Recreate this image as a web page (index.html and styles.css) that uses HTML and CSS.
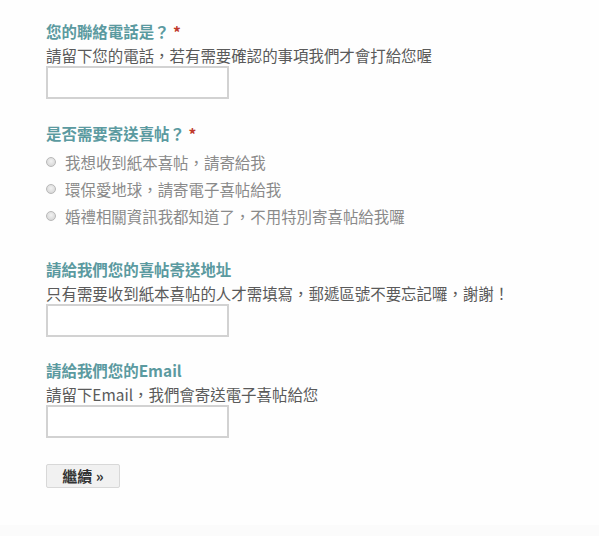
FILE: index.html
```html
<!DOCTYPE html>
<html lang="zh-TW">
<head>
<meta charset="utf-8">
<title>表單</title>
<link rel="stylesheet" href="styles.css">
</head>
<body>
<div class="page">
  <form class="form">
    <div class="field">
      <div class="label">您的聯絡電話是？ <span class="req">*</span></div>
      <div class="desc">請留下您的電話，若有需要確認的事項我們才會打給您喔</div>
      <input class="text" type="text">
    </div>
    <div class="field field-radio">
      <div class="label">是否需要寄送喜帖？ <span class="req">*</span></div>
      <ul class="choices">
        <li class="choice"><span class="radio"></span>我想收到紙本喜帖，請寄給我</li>
        <li class="choice"><span class="radio"></span>環保愛地球，請寄電子喜帖給我</li>
        <li class="choice"><span class="radio"></span>婚禮相關資訊我都知道了，不用特別寄喜帖給我囉</li>
      </ul>
    </div>
    <div class="field field-addr">
      <div class="label">請給我們您的喜帖寄送地址</div>
      <div class="desc">只有需要收到紙本喜帖的人才需填寫，郵遞區號不要忘記囉，謝謝！</div>
      <input class="text" type="text">
    </div>
    <div class="field field-mail">
      <div class="label">請給我們您的Email</div>
      <div class="desc">請留下Email，我們會寄送電子喜帖給您</div>
      <input class="text" type="text">
    </div>
    <div class="actions">
      <button type="button" class="btn">繼續 »</button>
    </div>
  </form>
  <div class="footer-band"></div>
</div>
</body>
</html>
```
FILE: styles.css
```css
html, body {
  margin: 0;
  padding: 0;
  background: #fefefe;
}
.page {
  height: 536px;
  display: flex;
  flex-direction: column;
  font-family: "Noto Sans CJK TC", "Noto Sans", sans-serif;
  -webkit-locale: "zh-TW";
  font-size: 15.45px;
  color: #5a5a5a;
}
.form {
  flex: 1;
  padding: 20px 0 0 46px;
}
.field {
  display: flex;
  flex-direction: column;
  align-items: flex-start;
}
.label {
  font-weight: bold;
  color: #5b9aa0;
  line-height: 22px;
  height: 22px;
}
.req {
  color: #c0392b;
}
.desc {
  margin-top: 2px;
  line-height: 22px;
  height: 22px;
  color: #5a5a5a;
}
.text {
  margin: 0;
  width: 183px;
  height: 33px;
  box-sizing: border-box;
  border: 2px solid #d2d2d2;
  background: #fff;
  padding: 0 4px;
}
.field-radio {
  margin-top: 23px;
}
.choices {
  list-style: none;
  margin: 4px 0 0;
  padding: 0;
}
.choice {
  display: flex;
  align-items: center;
  height: 27px;
  color: #8a8a8a;
}
.radio {
  width: 10px;
  height: 10px;
  box-sizing: border-box;
  border-radius: 50%;
  border: 1px solid #b8b8b8;
  background: radial-gradient(circle at 50% 40%, #f2f2f2, #d0d0d0);
  margin-right: 9px;
}
.field-addr {
  margin-top: 29px;
}
.field-mail {
  margin-top: 22px;
}
.actions {
  margin-top: 26px;
}
.btn {
  width: 74px;
  height: 24px;
  box-sizing: border-box;
  border: 1px solid #d8d8d8;
  border-radius: 2px;
  background: #f1f1f1;
  font-family: "Noto Sans CJK TC", "Noto Sans", sans-serif;
  font-size: 15px;
  font-weight: bold;
  color: #333;
  padding: 0;
  line-height: 20px;
}
.footer-band {
  height: 11px;
  background: #fbfbfb;
}
```
